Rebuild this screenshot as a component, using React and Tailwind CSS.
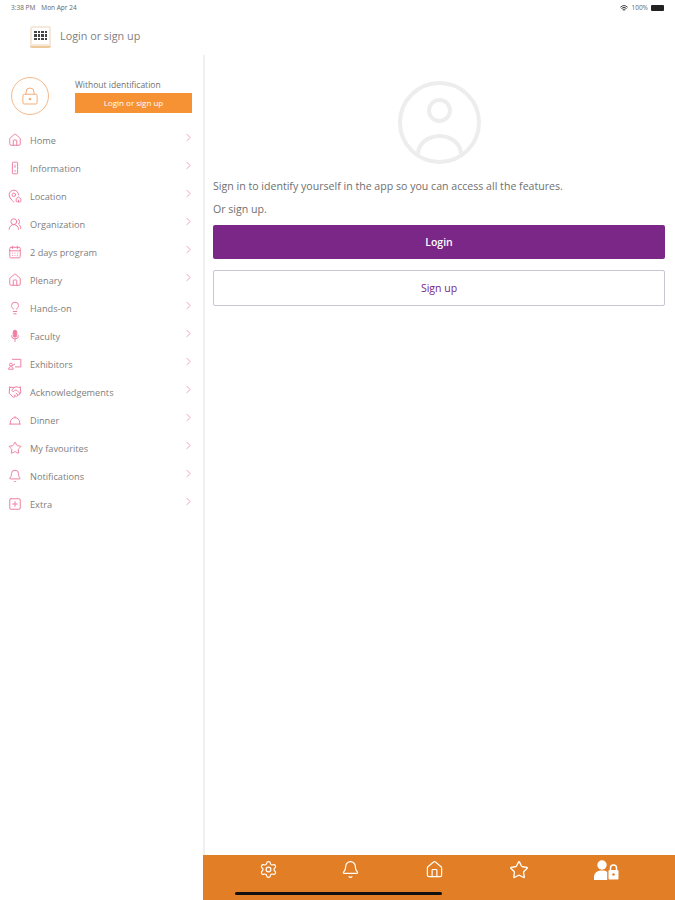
import { Home, House, MapPinHouse, UsersRound, CalendarDays, Lightbulb, Handshake, Star, Bell, SquarePlus, ChevronRight, Settings, Wifi } from "lucide-react";

// icons the package has no close match for
function PhoneSlim(props) {
  return (
    <svg viewBox="0 0 24 24" fill="none" stroke="currentColor" {...props}>
      <rect x="7.5" y="2" width="9" height="20" rx="1.5" />
      <path d="M12 6.5v5M10.5 17h3" />
    </svg>
  );
}

function MicSolid(props) {
  return (
    <svg viewBox="0 0 24 24" fill="none" stroke="currentColor" {...props}>
      <rect x="9" y="2" width="6" height="12" rx="3" fill="currentColor" />
      <path d="M6 11a6 6 0 0 0 12 0M12 17v5" />
    </svg>
  );
}

function Board(props) {
  return (
    <svg viewBox="0 0 24 24" fill="none" stroke="currentColor" {...props}>
      <path d="M7 4h15v13H12" />
      <circle cx="5" cy="13" r="2.5" />
      <path d="M1 21c0-3 2-4.500 4-4.500s4 1.500 4 4.500zM7 15l5-3" />
    </svg>
  );
}

function Cloche(props) {
  return (
    <svg viewBox="0 0 24 24" fill="none" stroke="currentColor" {...props}>
      <path d="M2 19h20M4 19v-3a8 8 0 0 1 16 0v3" />
      <path d="M12 8V5.500" />
    </svg>
  );
}

function UserLock(props) {
  return (
    <svg viewBox="0 0 25 20" fill="white" {...props}>
      <circle cx="8" cy="5" r="4.700" />
      <path d="M0 20v-3c0-4 3-6.500 8-6.500 2.200 0 4 .5 5.200 1.400V20z" />
      <rect x="14.500" y="10" width="10" height="9.500" rx="1" />
      <path d="M16.500 10V8a3 3 0 0 1 6 0v2" fill="none" stroke="white" strokeWidth="1.500" />
      <circle cx="19.500" cy="14.500" r="1.200" fill="#e27f26" />
    </svg>
  );
}

function LockOutline(props) {
  return (
    <svg viewBox="0 0 18 20" fill="none" stroke="currentColor" {...props}>
      <rect x="1" y="8" width="16" height="11" rx="1.500" />
      <path d="M4.500 8V5.500a4.500 4.500 0 0 1 9 0V8" />
      <circle cx="9" cy="13.500" r="1" fill="currentColor" />
    </svg>
  );
}

const MENU = [
  { label: "Home", icon: Home },
  { label: "Information", icon: PhoneSlim },
  { label: "Location", icon: MapPinHouse },
  { label: "Organization", icon: UsersRound },
  { label: "2 days program", icon: CalendarDays },
  { label: "Plenary", icon: House },
  { label: "Hands-on", icon: Lightbulb },
  { label: "Faculty", icon: MicSolid },
  { label: "Exhibitors", icon: Board },
  { label: "Acknowledgements", icon: Handshake },
  { label: "Dinner", icon: Cloche },
  { label: "My favourites", icon: Star },
  { label: "Notifications", icon: Bell },
  { label: "Extra", icon: SquarePlus },
];

function StatusBar() {
  return (
    <div className="h-[15px] flex items-center justify-between pl-[11px] pr-[11px] text-[6.5px] text-[#666]">
      <div className="flex gap-[6px]">
        <span>3:38 PM</span>
        <span>Mon Apr 24</span>
      </div>
      <div className="flex items-center gap-[3px]">
        <Wifi size={8} strokeWidth={3} className="text-[#444]" />
        <span>100%</span>
        <div className="w-[13px] h-[6px] bg-[#222] rounded-[1px]" />
      </div>
    </div>
  );
}

function Logo() {
  return (
    <div className="w-[21px] h-[22px] rounded-[2px] bg-[#f6e9da] border-b-2 border-[#eec99a] p-[2px]">
      <div className="h-full bg-white flex items-center justify-center">
        <div className="w-[13px] grid grid-cols-4 gap-x-[1px] gap-y-[1px]">
          {Array.from({ length: 12 }).map((_, i) => (
            <div key={i} className="h-[2.500px] bg-[#444]" />
          ))}
        </div>
      </div>
    </div>
  );
}

function MenuRow({ item }) {
  const Icon = item.icon;
  return (
    <div className="h-[28px] flex items-center pl-[8px] pr-[8px]">
      <Icon width={14} height={14} strokeWidth={1.7} className="text-[#ef7fa0] shrink-0" />
      <span className="ml-[8px] mt-[1px] flex-1 text-[9.2px] text-[#808080]">{item.label}</span>
      <ChevronRight size={13} strokeWidth={1.5} className="text-[#f08fac] -mt-[5px]" />
    </div>
  );
}

function Sidebar() {
  return (
    <div className="w-[203px] shrink-0 pt-[22px]">
      <div className="flex pl-[11px] pr-[11px]">
        <div className="w-[38px] h-[38px] rounded-full border border-[#f6b98a] flex items-center justify-center shrink-0">
          <LockOutline width={16} height={18} strokeWidth={1} className="text-[#f0a268]" />
        </div>
        <div className="ml-[26px] flex-1">
          <div className="text-[8.500px] leading-[12px] text-[#707070] mt-[2px]">Without identification</div>
          <div className="h-[20px] mt-[2px] bg-[#f79234] flex items-center justify-center text-[8px] text-white">
            Login or sign up
          </div>
        </div>
      </div>
      <div className="mt-[11px]">
        {MENU.map((item) => (
          <MenuRow key={item.label} item={item} />
        ))}
      </div>
    </div>
  );
}

function Avatar() {
  return (
    <div className="relative w-[83px] h-[83px] rounded-full border-[4px] border-[#ededed] overflow-hidden mx-auto">
      <div className="absolute left-[25px] top-[13px] w-[25px] h-[25px] rounded-full border-[4px] border-[#ededed]" />
      <div className="absolute left-[14px] top-[49px] w-[47px] h-[40px] rounded-[50%] border-[4px] border-[#ededed]" />
    </div>
  );
}

function TabBar() {
  return (
    <div className="relative h-[45px] bg-[#e27f26] flex items-start pt-[5px] pl-[56px] text-white">
      <Settings size={19} strokeWidth={1.5} />
      <Bell size={19} strokeWidth={1.5} className="ml-[63px]" />
      <Home size={19} strokeWidth={1.5} className="ml-[65px]" />
      <Star size={20} strokeWidth={1.6} className="ml-[65px]" />
      <UserLock width={25} height={20} className="ml-[65px]" />
      <div className="absolute left-[32px] top-[37px] w-[207px] h-[3px] rounded-full bg-[#111]" />
    </div>
  );
}

export default function App() {
  return (
    <div className="w-[675px] h-[900px] bg-white flex flex-col overflow-hidden font-['Open_Sans',sans-serif]">
      <StatusBar />
      <div className="h-[40px] flex items-center pl-[30px] pt-[3px]">
        <Logo />
        <span className="ml-[9px] text-[10.800px] text-[#808080]">Login or sign up</span>
      </div>
      <div className="flex-1 flex min-h-0">
        <Sidebar />
        <div className="flex-1 flex flex-col min-w-0">
          <div className="flex-1 border-l-2 border-[#f0f0f0] pl-[8px] pr-[10px] pt-[26px]">
            <Avatar />
            <p className="mt-[14px] text-[10.600px] leading-[16px] text-[#707070]">
              Sign in to identify yourself in the app so you can access all the features.
            </p>
            <p className="mt-[7px] text-[10.600px] leading-[16px] text-[#707070]">Or sign up.</p>
            <button className="mt-[8px] w-full h-[34px] pt-[2px] rounded-[2px] bg-[#7a2787] text-white text-[10.500px] font-semibold">
              Login
            </button>
            <button className="mt-[11px] w-full h-[36px] pt-[2px] rounded-[2px] bg-white border border-[#c9c5d3] text-[#7a2787] text-[10.500px]">
              Sign up
            </button>
          </div>
          <TabBar />
        </div>
      </div>
    </div>
  );
}
